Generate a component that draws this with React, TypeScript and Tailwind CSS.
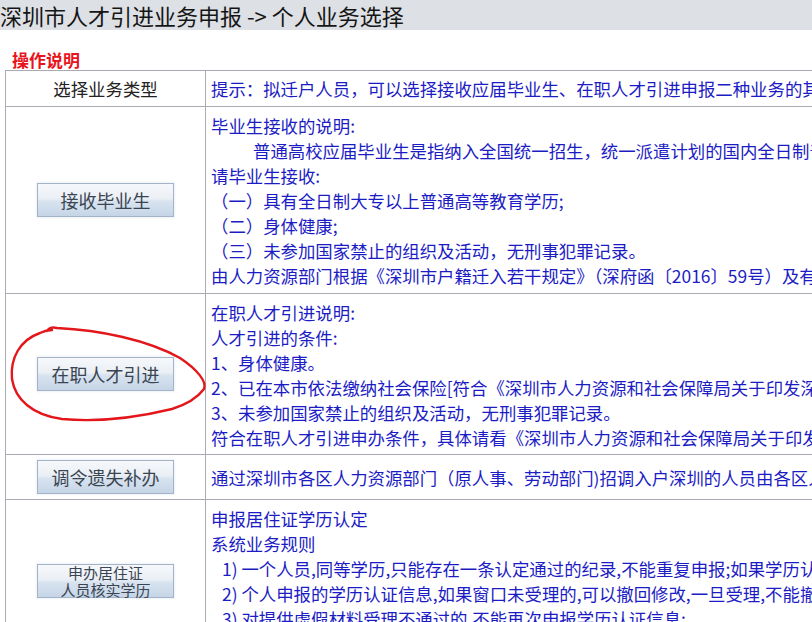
import React from "react";

const blue = "text-[#1c1cc4]";

function Btn({ children, two }: { children: React.ReactNode; two?: boolean }) {
  return (
    <div
      className={`flex h-[34px] w-[137px] flex-col items-center justify-center border border-[#a3b4c9] bg-[linear-gradient(180deg,#f6f8fb_0%,#eaeff5_46%,#d8e3ef_54%,#c5d5e7_100%)] text-[#3b4552] shadow-[0_0_2px_1px_#eef1f5] ${
        two ? "text-[15px] leading-[17px]" : "text-[18px] leading-[20px]"
      }`}
    >
      {children}
    </div>
  );
}

function Row({
  left,
  children,
  className = "",
  rightClass = "",
}: {
  left: React.ReactNode;
  children: React.ReactNode;
  className?: string;
  rightClass?: string;
}) {
  return (
    <div className={`flex border-b border-[#a9aab2] ${className}`}>
      <div className="flex w-[200px] shrink-0 items-center justify-center border-r border-[#a9aab2]">
        {left}
      </div>
      <div className={`flex-1 whitespace-nowrap pl-[5px] ${blue} ${rightClass}`}>{children}</div>
    </div>
  );
}

export default function App() {
  return (
    <div className="relative h-[622px] w-[812px] overflow-hidden bg-white font-['Noto_Sans_CJK_SC','Noto_Sans',sans-serif] text-[17.4px] leading-[25px]">
      <div className="flex h-[30px] items-center whitespace-nowrap bg-[#dde0e4] text-[22px] leading-[30px] text-[#151515]">
        深圳市人才引进业务申报 -&gt; 个人业务选择
      </div>
      <div className="mt-[20px] h-[20px] pl-[12px] text-[17px] font-bold leading-[20px] text-[#e8141b]">
        操作说明
      </div>
      <div className="ml-[5px] w-[1400px] border-l border-t border-[#a9aab2]">
        <Row left={<span className="text-[#222]">选择业务类型</span>} className="h-[36px]" rightClass="flex items-center">
          提示：拟迁户人员，可以选择接收应届毕业生、在职人才引进申报二种业务的其中一种进行申报。
        </Row>
        <Row left={<Btn>接收毕业生</Btn>} className="h-[187px]" rightClass="pt-[6px]">
          <div>毕业生接收的说明:</div>
          <div className="pl-[42px]">普通高校应届毕业生是指纳入全国统一招生，统一派遣计划的国内全日制普通高校毕业生。</div>
          <div>请毕业生接收:</div>
          <div>（一）具有全日制大专以上普通高等教育学历;</div>
          <div>（二）身体健康;</div>
          <div>（三）未参加国家禁止的组织及活动，无刑事犯罪记录。</div>
          <div>由人力资源部门根据《深圳市户籍迁入若干规定》（深府函〔2016〕59号）及有关规定办理。</div>
        </Row>
        <Row left={<Btn>在职人才引进</Btn>} className="h-[161px]" rightClass="pt-[6px]">
          <div>在职人才引进说明:</div>
          <div>人才引进的条件:</div>
          <div>1、身体健康。</div>
          <div>2、已在本市依法缴纳社会保险[符合《深圳市人力资源和社会保障局关于印发深圳市户籍迁入若干规定实施细则的通知》]；</div>
          <div>3、未参加国家禁止的组织及活动，无刑事犯罪记录。</div>
          <div>符合在职人才引进申办条件，具体请看《深圳市人力资源和社会保障局关于印发深圳市户籍迁入若干规定实施细则的通知》</div>
        </Row>
        <Row left={<Btn>调令遗失补办</Btn>} className="h-[45px]" rightClass="flex items-center">
          通过深圳市各区人力资源部门（原人事、劳动部门)招调入户深圳的人员由各区人力资源部门办理调令遗失补办。
        </Row>
        <Row
          left={
            <Btn two>
              <span>申办居住证</span>
              <span>人员核实学历</span>
            </Btn>
          }
          className="h-[162px]"
          rightClass="pt-[6px]"
        >
          <div>申报居住证学历认定</div>
          <div>系统业务规则</div>
          <div className="pl-[11px]">1) 一个人员,同等学历,只能存在一条认定通过的纪录,不能重复申报;如果学历认证不通过,可以重新申报;</div>
          <div className="pl-[11px]">2) 个人申报的学历认证信息,如果窗口未受理的,可以撤回修改,一旦受理,不能撤回修改;</div>
          <div className="pl-[11px]">3) 对提供虚假材料受理不通过的,不能再次申报学历认证信息;</div>
        </Row>
      </div>
      <svg
        className="pointer-events-none absolute left-0 top-0"
        width="812"
        height="622"
        viewBox="0 0 812 622"
        fill="none"
      >
        <path
          d="M47 331 C49 328, 53 327, 57 328 C100 330, 148 340, 180 358 C198 370, 207 382, 204 389 C198 397, 188 404, 172 409 C135 418, 95 422, 62 419 C32 415, 15 399, 12 379 C10 358, 20 340, 40 333 C44 331, 48 330, 52 330"
          stroke="#e3171b"
          strokeWidth="2.4"
          strokeLinecap="round"
        />
      </svg>
    </div>
  );
}
